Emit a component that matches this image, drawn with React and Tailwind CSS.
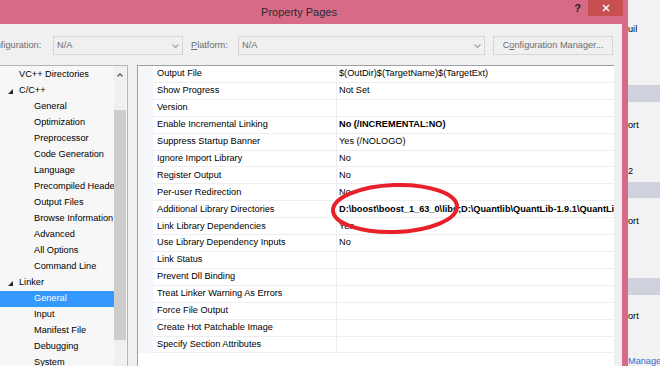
import React from 'react'

const treeItems = [
  { label: 'VC++ Directories', level: 1 },
  { label: 'C/C++', level: 1, open: true },
  { label: 'General', level: 2 },
  { label: 'Optimization', level: 2 },
  { label: 'Preprocessor', level: 2 },
  { label: 'Code Generation', level: 2 },
  { label: 'Language', level: 2 },
  { label: 'Precompiled Headers', level: 2 },
  { label: 'Output Files', level: 2 },
  { label: 'Browse Information', level: 2 },
  { label: 'Advanced', level: 2 },
  { label: 'All Options', level: 2 },
  { label: 'Command Line', level: 2 },
  { label: 'Linker', level: 1, open: true },
  { label: 'General', level: 2, selected: true },
  { label: 'Input', level: 2 },
  { label: 'Manifest File', level: 2 },
  { label: 'Debugging', level: 2 },
  { label: 'System', level: 2 }
]

const properties = [
  { name: 'Output File', value: '$(OutDir)$(TargetName)$(TargetExt)' },
  { name: 'Show Progress', value: 'Not Set' },
  { name: 'Version', value: '' },
  { name: 'Enable Incremental Linking', value: 'No (/INCREMENTAL:NO)', bold: true },
  { name: 'Suppress Startup Banner', value: 'Yes (/NOLOGO)' },
  { name: 'Ignore Import Library', value: 'No' },
  { name: 'Register Output', value: 'No' },
  { name: 'Per-user Redirection', value: 'No' },
  { name: 'Additional Library Directories', value: 'D:\\boost\\boost_1_63_0\\libs;D:\\Quantlib\\QuantLib-1.9.1\\QuantLib\\lib;%(AdditionalLibraryDirectories)', bold: true },
  { name: 'Link Library Dependencies', value: 'Yes' },
  { name: 'Use Library Dependency Inputs', value: 'No' },
  { name: 'Link Status', value: '' },
  { name: 'Prevent Dll Binding', value: '' },
  { name: 'Treat Linker Warning As Errors', value: '' },
  { name: 'Force File Output', value: '' },
  { name: 'Create Hot Patchable Image', value: '' },
  { name: 'Specify Section Attributes', value: '' }
]

function Chevron() {
  return (
    <svg width="7" height="4" viewBox="0 0 7 4" className="shrink-0">
      <polyline points="0.5,0.5 3.5,3.5 6.5,0.5" fill="none" stroke="#a6a6a6" strokeWidth="1.2" />
    </svg>
  )
}

function Dropdown({ width }) {
  return (
    <div className={`flex h-[19px] ${width} items-center justify-between border border-[#d6d6d6] pl-[3px] pr-[3px]`}>
      <span>N/A</span>
      <Chevron />
    </div>
  )
}

function TreeRow({ item }) {
  return (
    <div
      className={`flex h-[16px] items-center whitespace-nowrap ${item.level === 1 ? 'pl-[8px]' : 'pl-[34px]'} ${item.selected ? 'bg-[#3399ff] text-white' : ''}`}
    >
      {item.level === 1 && (
        <span className="flex w-[11px] shrink-0 items-center">
          {item.open && (
            <svg width="5" height="5" viewBox="0 0 5 5">
              <polygon points="5,0 5,5 0,5" fill="#262626" />
            </svg>
          )}
        </span>
      )}
      {item.label}
    </div>
  )
}

export default function App() {
  return (
    <div className="relative flex h-[366px] w-[660px] overflow-hidden bg-[#f2f2f2] font-['Liberation_Sans',Arial,sans-serif] text-[9.2px] leading-none text-black">
      <div className="-ml-[30px] flex w-[658px] shrink-0 flex-col">
        {/* title bar */}
        <div className="grid h-[24px] grid-cols-[1fr_auto_1fr] bg-[#d66a87]">
          <div />
          <div className="flex items-center text-[11px] text-[#2a2a2a]">Property Pages</div>
          <div className="flex items-start justify-end pr-[5px]">
            <span className="mr-[7px] mt-[3px] text-[11px] font-bold text-[#222]">?</span>
            <div className="flex h-[16px] w-[35px] items-center justify-center bg-[#c75050]">
              <svg width="8" height="8" viewBox="0 0 8 8">
                <path d="M1 1 L7 7 M7 1 L1 7" stroke="#fff" strokeWidth="1.4" />
              </svg>
            </div>
          </div>
        </div>

        <div className="flex min-h-0 flex-1 flex-col border-r-[6px] border-[#d66a87] bg-[#f0f0f0]">
          {/* configuration row */}
          <div className="mt-[12px] flex items-center pl-[14px] text-[#6d6d6d]">
            <span className="w-[69px]">Configuration:</span>
            <Dropdown width="w-[130px]" />
            <span className="ml-[8px] w-[47px]"><span className="underline">P</span>latform:</span>
            <Dropdown width="w-[247px]" />
            <div className="ml-[8px] flex h-[19px] w-[120px] items-center justify-center border border-[#d6d6d6]">
              C<span className="underline">o</span>nfiguration Manager...
            </div>
          </div>

          {/* panels */}
          <div className="mt-[10px] flex min-h-0 flex-1 gap-[9px] pl-[29px] pr-[8px]">
            <div className="flex w-[129px] shrink-0 border-l border-r border-t border-[#b4b4b4] bg-[#f7f7f7]">
              <div className="min-w-0 flex-1 overflow-hidden pt-[1px]">
                {treeItems.map((item, i) => (
                  <TreeRow key={i} item={item} />
                ))}
              </div>
              <div className="mr-[1px] flex w-[12px] shrink-0 flex-col items-center bg-[#f0f0f0]">
                <div className="flex h-[17px] items-center">
                  <svg width="6" height="4" viewBox="0 0 6 4">
                    <polyline points="0.5,3.5 3,1 5.5,3.5" fill="none" stroke="#606060" strokeWidth="1.4" />
                  </svg>
                </div>
                <div className="mt-[27px] h-[230px] w-full bg-[#cdcdcd]" />
              </div>
            </div>

            <div className="min-w-0 flex-1 border-l border-t border-[#a0a0a0] bg-white">
              {properties.map((p) => (
                <div key={p.name} className="flex h-[16.92px]">
                  <div className="w-[15px] shrink-0 bg-[#f4f6fa]" />
                  <div className="flex w-[183px] shrink-0 items-center overflow-hidden whitespace-nowrap border-b border-[#eceef1] pl-[4px]">
                    {p.name}
                  </div>
                  <div className={`flex min-w-0 flex-1 items-center overflow-hidden whitespace-nowrap border-b border-l border-[#eceef1] pl-[2px] ${p.bold ? 'font-bold' : ''}`}>
                    {p.value}
                  </div>
                </div>
              ))}
            </div>
          </div>
        </div>
      </div>

      {/* window behind the dialog */}
      <div className="flex w-[32px] shrink-0 flex-col overflow-hidden whitespace-nowrap [&>*]:shrink-0">
        <div className="mt-[22px] flex h-[16px] items-center">uil</div>
        <div className="mt-[47px] h-[17px] bg-[#cfd1dc]" />
        <div className="mt-[16px] flex h-[16px] items-center">ort</div>
        <div className="mt-[30px] flex h-[16px] items-center">2</div>
        <div className="mt-[2px] h-[16px] bg-[#cfd1dc]" />
        <div className="mt-[16px] flex h-[16px] items-center">ort</div>
        <div className="mt-[48px] h-[17px] bg-[#cfd1dc]" />
        <div className="mt-[14px] flex h-[16px] items-center">ort</div>
        <div className="mt-[29px] flex h-[16px] items-center text-[#2f6fd0]">Manager</div>
      </div>

      {/* hand-drawn annotation */}
      <svg className="absolute left-[328px] top-[180px]" width="134" height="58" viewBox="0 0 134 58">
        <ellipse cx="67" cy="28.5" rx="62" ry="23.5" fill="none" stroke="#e8202a" strokeWidth="4" transform="rotate(-2 67 28.5)" />
      </svg>
    </div>
  )
}
